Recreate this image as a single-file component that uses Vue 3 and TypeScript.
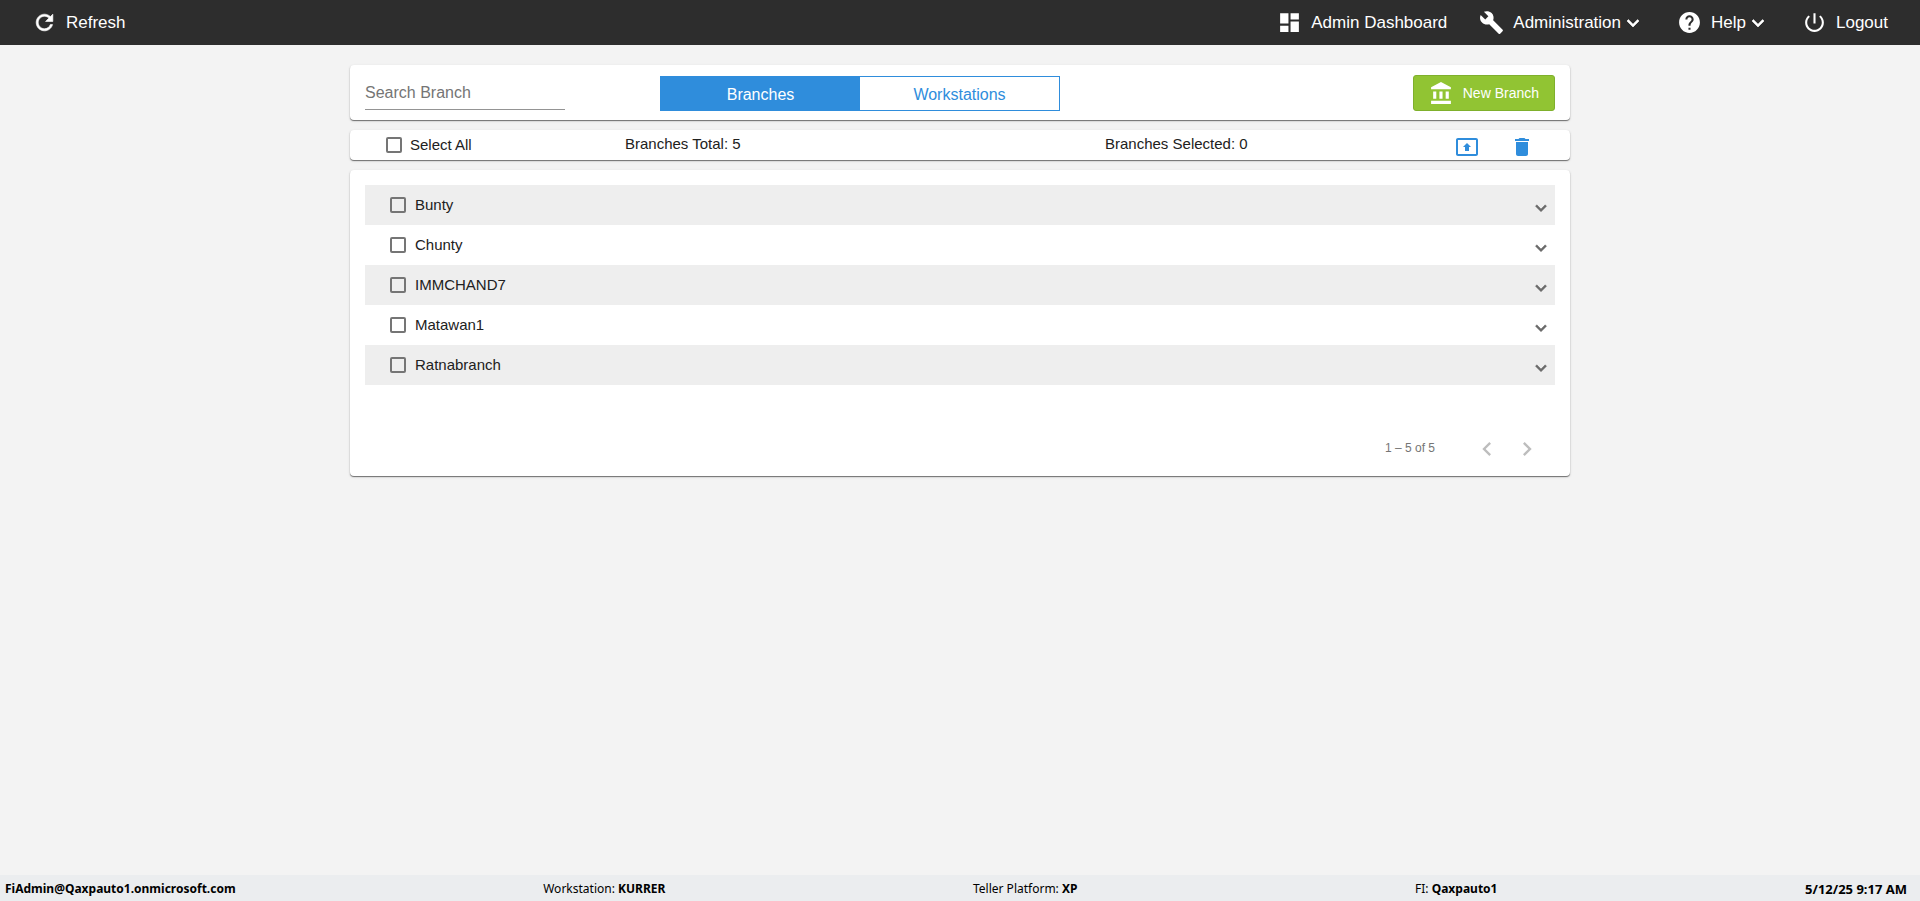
<script setup lang="ts">
import { computed, ref } from 'vue'

interface NavItem {
  label: string
  icon: string
  menu: boolean
}

interface Branch {
  id: number
  name: string
}

const navItems: NavItem[] = [
  { label: 'Admin Dashboard', icon: 'M3 13h8V3H3v10zm0 8h8v-6H3v6zm10 0h8V11h-8v10zm0-18v6h8V3h-8z', menu: false },
  {
    label: 'Administration',
    icon: 'M22.7 19l-9.1-9.1c.9-2.3.4-5-1.5-6.9-2-2-5-2.4-7.4-1.3L9 6 6 9 1.6 4.7C.4 7.1.9 10.1 2.9 12.1c1.9 1.9 4.6 2.4 6.9 1.5l9.1 9.1c.4.4 1 .4 1.4 0l2.3-2.3c.5-.4.5-1.1.1-1.4z',
    menu: true,
  },
  {
    label: 'Help',
    icon: 'M12 2C6.48 2 2 6.48 2 12s4.48 10 10 10 10-4.48 10-10S17.52 2 12 2zm1 17h-2v-2h2v2zm2.07-7.75l-.9.92C13.45 12.9 13 13.5 13 15h-2v-.5c0-1.1.45-2.1 1.17-2.83l1.24-1.26c.37-.36.59-.86.59-1.41 0-1.1-.9-2-2-2s-2 .9-2 2H8c0-2.21 1.79-4 4-4s4 1.79 4 4c0 .88-.36 1.68-.93 2.25z',
    menu: true,
  },
  {
    label: 'Logout',
    icon: 'M13 3h-2v10h2V3zm4.83 2.17l-1.42 1.42C17.99 7.86 19 9.81 19 12c0 3.87-3.13 7-7 7s-7-3.13-7-7c0-2.19 1.01-4.14 2.58-5.42L6.17 5.17C4.23 6.82 3 9.26 3 12c0 4.97 4.03 9 9 9s9-4.03 9-9c0-2.74-1.23-5.18-3.17-6.83z',
    menu: false,
  },
]

const chevronDown = 'M16.59 8.59L12 13.17 7.41 8.59 6 10l6 6 6-6z'

const branches: Branch[] = ['Bunty', 'Chunty', 'IMMCHAND7', 'Matawan1', 'Ratnabranch'].map((name, id) => ({ id, name }))

const search = ref('')
const tab = ref<'Branches' | 'Workstations'>('Branches')
const tabs = ['Branches', 'Workstations'] as const
const selected = ref<number[]>([])

const visible = computed(() =>
  branches.filter((b) => b.name.toLowerCase().includes(search.value.toLowerCase())),
)
const allSelected = computed({
  get: () => selected.value.length === branches.length,
  set: (on: boolean) => {
    selected.value = on ? branches.map((b) => b.id) : []
  },
})
</script>

<template>
  <div class="page">
    <header class="topbar">
      <button type="button" class="nav-item">
        <svg class="nav-icon bold" viewBox="0 0 24 24" aria-hidden="true">
          <path d="M17.65 6.35C16.2 4.9 14.21 4 12 4c-4.42 0-7.99 3.58-7.99 8s3.57 8 7.99 8c3.73 0 6.84-2.55 7.73-6h-2.08c-.82 2.33-3.04 4-5.65 4-3.31 0-6-2.69-6-6s2.69-6 6-6c1.66 0 3.14.69 4.22 1.78L13 11h7V4l-2.35 2.35z" />
        </svg>
        <span>Refresh</span>
      </button>
      <nav class="nav">
        <button v-for="item in navItems" :key="item.label" type="button" class="nav-item">
          <svg class="nav-icon" viewBox="0 0 24 24" aria-hidden="true"><path :d="item.icon" /></svg>
          <span>{{ item.label }}</span>
          <svg v-if="item.menu" class="icon bold" viewBox="0 0 24 24" aria-hidden="true"><path :d="chevronDown" /></svg>
        </button>
      </nav>
    </header>

    <main class="content">
      <section class="card toolbar">
        <input v-model="search" class="search" type="text" placeholder="Search Branch" aria-label="Search Branch" />
        <div class="tabs">
          <button
            v-for="name in tabs"
            :key="name"
            type="button"
            class="tab"
            :class="{ active: tab === name }"
            :aria-pressed="tab === name"
            @click="tab = name"
          >
            {{ name }}
          </button>
        </div>
        <button type="button" class="new-branch">
          <svg class="nav-icon" viewBox="0 0 24 24" aria-hidden="true">
            <path d="M4 10v7h3v-7H4zm6 0v7h3v-7h-3zM2 22h19v-3H2v3zm14-12v7h3v-7h-3zm-4.5-9L2 6v2h19V6l-9.5-5z" />
          </svg>
          <span>New Branch</span>
        </button>
      </section>

      <section class="card summary">
        <label class="check">
          <input v-model="allSelected" class="box" type="checkbox" />
          <span>Select All</span>
        </label>
        <span class="count">Branches Total: {{ branches.length }}</span>
        <span class="count">Branches Selected: {{ selected.length }}</span>
        <div class="actions">
          <button type="button" class="icon-button" aria-label="Move branches">
            <svg class="icon" viewBox="0 0 24 24" aria-hidden="true">
              <path d="M21 3H3c-1.11 0-2 .89-2 2v14c0 1.11.89 2 2 2h18c1.11 0 2-.89 2-2V5c0-1.11-.89-2-2-2zm0 16.02H3V4.98h18v14.04zM10 12H8l4-4 4 4h-2v4h-4v-4z" />
            </svg>
          </button>
          <button type="button" class="icon-button" aria-label="Delete branches">
            <svg class="icon" viewBox="0 0 24 24" aria-hidden="true">
              <path d="M6 19c0 1.1.9 2 2 2h8c1.1 0 2-.9 2-2V7H6v12zM19 4h-3.5l-1-1h-5l-1 1H5v2h14V4z" />
            </svg>
          </button>
        </div>
      </section>

      <section class="card listing">
        <ul class="rows">
          <li v-for="branch in visible" :key="branch.id" class="row">
            <label class="check">
              <input v-model="selected" class="box" type="checkbox" :value="branch.id" />
              <span>{{ branch.name }}</span>
            </label>
            <button type="button" class="expand" :aria-label="`Expand ${branch.name}`">
              <svg class="bold" viewBox="0 0 24 24" aria-hidden="true"><path :d="chevronDown" /></svg>
            </button>
          </li>
        </ul>
        <div class="paginator">
          <span class="range">1 – 5 of 5</span>
          <button type="button" class="page-button" aria-label="Previous page" disabled>
            <svg viewBox="0 0 24 24" aria-hidden="true"><path d="M15.41 7.41L14 6l-6 6 6 6 1.41-1.41L10.83 12z" /></svg>
          </button>
          <button type="button" class="page-button" aria-label="Next page" disabled>
            <svg viewBox="0 0 24 24" aria-hidden="true"><path d="M10 6L8.59 7.41 13.17 12l-4.58 4.59L10 18l6-6z" /></svg>
          </button>
        </div>
      </section>
    </main>

    <footer class="statusbar">
      <strong>FiAdmin@Qaxpauto1.onmicrosoft.com</strong>
      <span>Workstation: <strong>KURRER</strong></span>
      <span class="platform">Teller Platform: <strong>XP</strong></span>
      <span>FI: <strong>Qaxpauto1</strong></span>
      <strong class="clock">5/12/25 9:17 AM</strong>
    </footer>
  </div>
</template>

<style>
body {
  margin: 0;
  background: #f3f3f3;
}
</style>

<style scoped>
.page {
  display: flex;
  flex-direction: column;
  min-height: 100vh;
  background: #f3f3f3;
  color: #212121;
  font: 15px/20px "Liberation Sans", Arial, sans-serif;
}
.page * {
  box-sizing: border-box;
}
button {
  padding: 0;
  border: 0;
  background: none;
  color: inherit;
  font: inherit;
  cursor: pointer;
}
svg {
  display: block;
  flex: none;
  fill: currentColor;
}
.bold path {
  stroke: currentColor;
  stroke-width: 0.6;
}
.topbar {
  display: flex;
  align-items: center;
  justify-content: space-between;
  height: 45px;
  padding: 0 32px;
  background: #2d2d2d;
  color: #fff;
}
.nav {
  display: flex;
  gap: 32px;
}
.nav-item {
  display: flex;
  align-items: center;
  font-size: 17px;
  white-space: nowrap;
}
.nav-icon {
  width: 25px;
  height: 25px;
  margin-right: 9px;
}
.icon {
  width: 24px;
  height: 24px;
}
.content {
  display: flex;
  flex: 1;
  flex-direction: column;
  gap: 10px;
  width: 100%;
  max-width: 1220px;
  margin: 0 auto;
  padding: 20px 0;
}
.card {
  border-radius: 4px;
  background: #fff;
  box-shadow: 0 1px 1px rgba(0, 0, 0, 0.5), 0 1px 3px rgba(0, 0, 0, 0.12);
}
.toolbar {
  display: grid;
  grid-template-columns: 295px 400px 1fr;
  align-items: start;
  height: 55px;
  padding: 10px 15px 0;
}
.search {
  width: 200px;
  height: 35px;
  padding: 2px 0 0;
  border: 0;
  border-bottom: 1px solid #949494;
  background: transparent;
  color: #212121;
  font: inherit;
  font-size: 16px;
  outline: none;
}
.search::placeholder {
  color: #757575;
  opacity: 1;
}
.tabs {
  display: grid;
  grid-template-columns: 1fr 1fr;
  height: 35px;
  margin-top: 1px;
  border: 1px solid #2f8ddc;
}
.tab {
  padding-top: 2px;
  color: #2f8ddc;
  font-size: 16px;
}
.tab.active {
  background: #2f8ddc;
  color: #fff;
}
.new-branch {
  display: flex;
  align-items: center;
  justify-self: end;
  height: 36px;
  padding: 0 15px;
  border: 1px solid #7fb02c;
  border-radius: 3px;
  background: #91c433;
  color: #fff;
  font-size: 14px;
  white-space: nowrap;
}
.summary {
  display: grid;
  grid-template-columns: 239px 480px 1fr auto;
  height: 30px;
  padding: 0 36px;
}
.check {
  display: flex;
  align-items: center;
  gap: 8px;
  cursor: pointer;
}
.box {
  width: 16px;
  height: 16px;
  margin: 0;
  border: 2px solid #757575;
  border-radius: 2px;
  background: transparent;
  appearance: none;
  cursor: pointer;
}
.box:checked {
  border-color: #2f8ddc;
  background: #2f8ddc;
}
.count {
  line-height: 28px;
}
.actions {
  display: flex;
  align-items: flex-end;
  gap: 31px;
  padding-bottom: 1px;
  color: #2f8ddc;
}
.listing {
  padding: 15px 15px 0;
}
.rows {
  margin: 0 0 35px;
  padding: 0;
  list-style: none;
}
.row {
  display: flex;
  align-items: center;
  justify-content: space-between;
  height: 40px;
  padding: 0 3px 0 25px;
}
.row:nth-child(odd) {
  background: #eee;
}
.row .check {
  gap: 9px;
}
.expand {
  padding-top: 5px;
  color: #6b6b6b;
}
.expand svg {
  width: 22px;
  height: 22px;
}
.paginator {
  display: flex;
  align-items: center;
  justify-content: flex-end;
  height: 56px;
  padding-right: 8px;
  font-size: 12px;
}
.range {
  margin-right: 32px;
  color: #757575;
}
.page-button {
  display: grid;
  place-items: center;
  width: 40px;
  height: 40px;
  padding-top: 2px;
  color: #bdbdbd;
}
.page-button svg {
  width: 28px;
  height: 28px;
}
.statusbar {
  display: flex;
  align-items: center;
  justify-content: space-between;
  height: 26px;
  padding: 1px 13px 0 5px;
  background: #ebedef;
  color: #000;
  font-family: "Segoe UI", "Noto Sans", "Open Sans", sans-serif;
  font-size: 12px;
  white-space: nowrap;
}
.platform {
  padding-right: 30px;
}
.clock {
  font-size: 13px;
}
</style>
